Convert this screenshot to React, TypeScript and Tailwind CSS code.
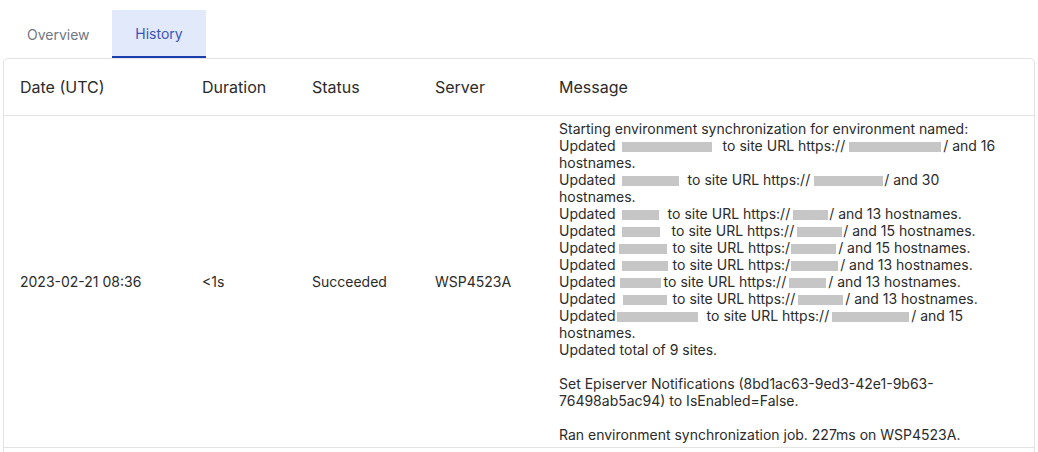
import React from "react";

const Box = ({ gap, off, w }: { gap: number; off: number; w: number }) => (
  <span className="relative inline-block h-[10px] align-middle" style={{ width: gap }}>
    <span className="absolute top-0 h-[10px] bg-[#c6c6c6]" style={{ left: off, width: w }} />
  </span>
);

type L = { a: [number, number, number]; slash: string; b: [number, number, number]; tail: string; wrap?: boolean };

const lines: L[] = [
  { a: [107, 6, 90], slash: "https://", b: [98, 4, 92], tail: "/ and 16", wrap: true },
  { a: [72, 6, 57], slash: "https://", b: [74, 4, 69], tail: "/ and 30", wrap: true },
  { a: [52, 6, 37], slash: "https://", b: [39, 3, 35], tail: "/ and 13 hostnames." },
  { a: [56, 6, 38], slash: "https://", b: [49, 3, 45], tail: "/ and 15 hostnames." },
  { a: [57, 3, 48], slash: "https:/", b: [48, 1, 45], tail: "/ and 15 hostnames." },
  { a: [57, 6, 46], slash: "https:/", b: [50, 1, 47], tail: "/ and 13 hostnames." },
  { a: [48, 4, 41], slash: "https://", b: [42, 3, 37], tail: "/ and 13 hostnames." },
  { a: [57, 7, 44], slash: "https://", b: [50, 3, 45], tail: "/ and 13 hostnames." },
  { a: [91, 1, 81], slash: "https://", b: [82, 3, 77], tail: "/ and 15", wrap: true },
];

export default function App() {
  return (
    <div className="w-[1038px] h-[452px] bg-white overflow-hidden text-[#2b2b2b]" style={{ fontFamily: "Inter, 'Noto Sans', sans-serif" }}>
      <div className="flex pl-[3px] pt-[10px]">
        <div className="h-[48px] w-[109px] px-6 flex items-center text-[14px] text-[#707783]">Overview</div>
        <div className="h-[48px] w-[94px] flex items-center justify-center text-[14px] text-[#3a55b8] bg-[#e2e9fb] border-b-2 border-[#1d3fae]">History</div>
      </div>
      <div className="ml-[3px] w-[1032px] border border-[#e3e3e3] rounded-[5px]">
        <div className="grid grid-cols-[182px_110px_123px_124px_1fr] h-[57px] items-center border-b border-[#e3e3e3] text-[16px] text-[#2b2b2b]">
          <div className="px-4">Date (UTC)</div>
          <div className="px-4">Duration</div>
          <div className="px-4">Status</div>
          <div className="px-4">Server</div>
          <div className="px-4">Message</div>
        </div>
        <div className="grid grid-cols-[182px_110px_123px_124px_1fr] items-center border-b border-[#e3e3e3] text-[14px]">
          <div className="px-4">2023-02-21 08:36</div>
          <div className="px-4">&lt;1s</div>
          <div className="px-4">Succeeded</div>
          <div className="px-4">WSP4523A</div>
          <div className="px-4 py-1 leading-[17px] whitespace-nowrap">
            <div>Starting environment synchronization for environment named:</div>
            {lines.map((l, i) => (
              <React.Fragment key={i}>
                <div>
                  Updated<Box gap={l.a[0]} off={l.a[1]} w={l.a[2]} />to site URL {l.slash}
                  <Box gap={l.b[0]} off={l.b[1]} w={l.b[2]} />
                  {l.tail}
                </div>
                {l.wrap && <div>hostnames.</div>}
              </React.Fragment>
            ))}
            <div>Updated total of 9 sites.</div>
            <div className="h-[17px]" />
            <div>Set Episerver Notifications (8bd1ac63-9ed3-42e1-9b63-</div>
            <div>76498ab5ac94) to IsEnabled=False.</div>
            <div className="h-[17px]" />
            <div>Ran environment synchronization job. 227ms on WSP4523A.</div>
          </div>
        </div>
        <div className="h-[20px]" />
      </div>
    </div>
  );
}
